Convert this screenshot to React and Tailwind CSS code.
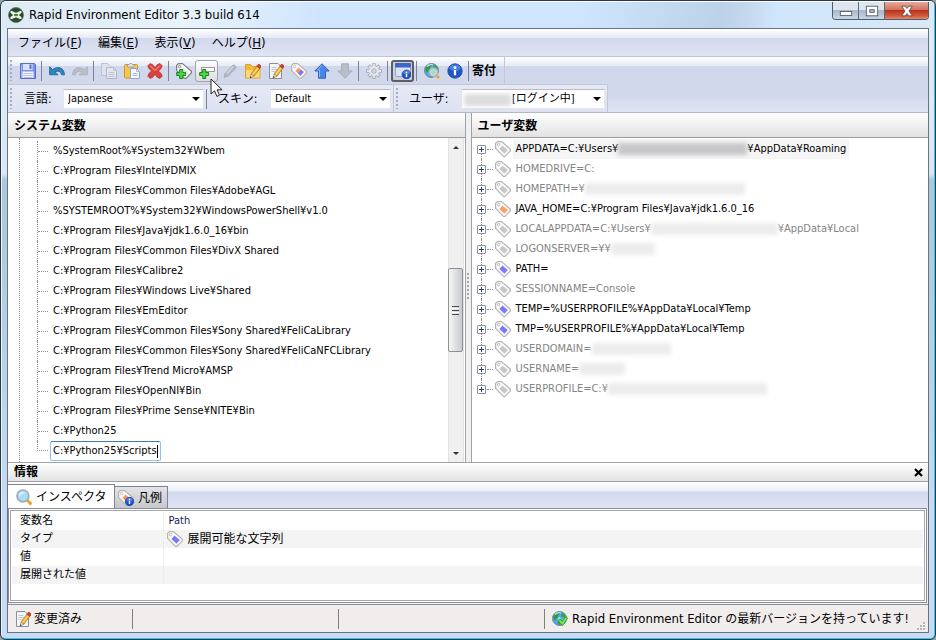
import React, { useState } from 'react';

const systemPaths = [
  '%SystemRoot%¥System32¥Wbem',
  'C:¥Program Files¥Intel¥DMIX',
  'C:¥Program Files¥Common Files¥Adobe¥AGL',
  '%SYSTEMROOT%¥System32¥WindowsPowerShell¥v1.0',
  'C:¥Program Files¥Java¥jdk1.6.0_16¥bin',
  'C:¥Program Files¥Common Files¥DivX Shared',
  'C:¥Program Files¥Calibre2',
  'C:¥Program Files¥Windows Live¥Shared',
  'C:¥Program Files¥EmEditor',
  'C:¥Program Files¥Common Files¥Sony Shared¥FeliCaLibrary',
  'C:¥Program Files¥Common Files¥Sony Shared¥FeliCaNFCLibrary',
  'C:¥Program Files¥Trend Micro¥AMSP',
  'C:¥Program Files¥OpenNI¥Bin',
  'C:¥Program Files¥Prime Sense¥NITE¥Bin',
  'C:¥Python25',
];

const userVars = [
  { name: 'APPDATA=C:¥Users¥', mask: 'w-[129px] bg-[#c6c6c8]', after: '¥AppData¥Roaming', tag: '#c8c8c8', active: true, hot: true },
  { name: 'HOMEDRIVE=C:', tag: '#c8c8c8' },
  { name: 'HOMEPATH=¥', mask: 'w-[160px] bg-[#ececec]', tag: '#c8c8c8' },
  { name: 'JAVA_HOME=C:¥Program Files¥Java¥jdk1.6.0_16', tag: '#ffa060', active: true },
  { name: 'LOCALAPPDATA=C:¥Users¥', mask: 'w-[127px] bg-[#ececec]', after: '¥AppData¥Local', tag: '#c8c8c8' },
  { name: 'LOGONSERVER=¥¥', mask: 'w-[44px] bg-[#ececec]', tag: '#c8c8c8' },
  { name: 'PATH=', tag: '#7b78ff', active: true },
  { name: 'SESSIONNAME=Console', tag: '#c8c8c8' },
  { name: 'TEMP=%USERPROFILE%¥AppData¥Local¥Temp', tag: '#7b78ff', active: true },
  { name: 'TMP=%USERPROFILE%¥AppData¥Local¥Temp', tag: '#7b78ff', active: true },
  { name: 'USERDOMAIN=', mask: 'w-[79px] bg-[#ececec]', tag: '#c8c8c8' },
  { name: 'USERNAME=', mask: 'w-[46px] bg-[#ececec]', tag: '#c8c8c8' },
  { name: 'USERPROFILE=C:¥', mask: 'w-[159px] bg-[#ececec]', tag: '#c8c8c8' },
];

const inspectorRows = [
  { label: '変数名', value: 'Path' },
  { label: 'タイプ', value: '展開可能な文字列', icon: true },
  { label: '値', value: '' },
  { label: '展開された値', value: '' },
];

/* ---------- Icons ---------- */

const Svg = ({ size = 16, children }) => (
  <svg width={size} height={size} viewBox="0 0 16 16" fill="none" className="block shrink-0" aria-hidden="true">
    {children}
  </svg>
);

const TagShape = ({ fill, stroke = '#b4b4b4' }) => (
  <>
    <path d="M.6 2.4 2.400.6h4.200l8.800 7.600v1.600L10 15.400H8.400L.6 7.400z" fill="#fbfbfb" stroke={stroke} strokeWidth="1.200" strokeLinejoin="round" />
    <circle cx="3.600" cy="3.600" r="1.200" fill="#fff" stroke={stroke} strokeWidth=".9" />
    <path d="M7.400 4.600 12.800 9 9.400 12.800 4.400 8z" fill={fill} />
  </>
);

const TagIcon = ({ fill, stroke, size }) => (
  <Svg size={size}>
    <TagShape fill={fill} stroke={stroke} />
  </Svg>
);

const Plus = () => (
  <path d="M3.700 6.500h3v3h3v3h-3v3h-3v-3h-3v-3h3z" fill="#4fd44a" stroke="#15871b" />
);

const Pencil = () => (
  <>
    <path d="M6 11 11.800 3.200l3 2.200L9 13.200z" fill="#f5b93a" stroke="#9a6424" strokeWidth=".6" />
    <path d="M7.400 12 13.300 4.400" stroke="#fbe28e" />
    <path d="m11.800 3.200 1.300-1.700c.8-.9 3.700 1.200 3 2.200l-1.300 1.700z" fill="#d8402e" stroke="#8f2216" strokeWidth=".5" />
    <path d="m6 11-.9 4.100L9 13.200z" fill="#f3dcb4" stroke="#8a6a3a" strokeWidth=".5" />
    <path d="m5.500 13.300-.4 1.800 1.600-.8z" fill="#222" />
  </>
);

const Earth = () => (
  <>
    <circle cx="7.500" cy="7.500" r="7" fill="#55a9e6" stroke="#5f7fae" strokeWidth=".9" />
    <path d="M1.600 4.500C3 2 5.400 1 7.600 1l.6 1.800-2 1.200.3 2-2.200 1.200-.6 2.600C2 9.200 1 7 1.600 4.500z" fill="#2f9a45" />
    <path d="M10 1.500c2 .8 3.600 2.500 4.200 4.600l-1.800.8-1.700-1.100-1.400.2-.4-2.100z" fill="#35a54b" />
    <path d="M5.500 10.500 8 10l1.500 2-1.300 2.300c-1.700 0-2.700-1-2.700-3.800z" fill="#35a54b" />
    <path d="M3 3.500C4.500 1.800 7 1.400 9 2" stroke="#cdeeff" strokeWidth="1.200" opacity=".9" />
    <path d="M7 5.500 9 7.500 8 9 5.500 8.500z" fill="#a8def8" />
  </>
);

const InfoDot = ({ cx = 8, cy = 8, r = 7.2 }) => (
  <>
    <circle cx={cx} cy={cy} r={r} fill="#1f56c4" stroke="#17439c" strokeWidth=".8" />
    <ellipse cx={cx} cy={cy - r * 0.45} rx={r * 0.75} ry={r * 0.45} fill="#6f9cf0" opacity=".6" />
    <rect x={cx - r * 0.16} y={cy - r * 0.15} width={r * 0.32} height={r * 0.75} fill="#fff" />
    <circle cx={cx} cy={cy - r * 0.48} r={r * 0.19} fill="#fff" />
  </>
);

const AppIcon = () => (
  <Svg>
    <circle cx="8" cy="8" r="7.500" fill="#2c4a2e" stroke="#5f7a60" strokeWidth=".8" />
    <path d="M2.500 4.200C4 3 6 5.600 8 5.600S12 3 13.500 4.200C14.500 5.500 12 7 10.800 8c1.200 1 3.700 2.500 2.700 3.800-1.500 1.200-3.500-1.400-5.500-1.400S4 13 2.500 11.800C1.500 10.500 4 9 5.200 8 4 7 1.500 5.500 2.500 4.200z" fill="#e9f4e6" />
    <ellipse cx="8" cy="8" rx="2.200" ry="1.200" fill="#55775a" />
  </Svg>
);

const SaveIcon = () => (
  <Svg>
    <path d="M.5.500h14l1 1v14H.5z" fill="#7c92e4" stroke="#5a6ec4" />
    <rect x="3" y="1" width="9.500" height="6" fill="#d9e2fa" />
    <rect x="9.500" y="1.500" width="2" height="4.500" fill="#5a6fce" />
    <rect x="2.500" y="8.500" width="11" height="6.500" fill="#f4f6fd" />
    <path d="M3.500 10.500h9M3.500 12.500h9M3.500 14.500h9" stroke="#b3bfe8" />
    <path d="M1.500 2v13" stroke="#a3b3f2" />
  </Svg>
);

const UndoIcon = () => (
  <Svg>
    <path d="M.6 3.600v8.200h8.400L6.400 9.200C8.700 7.300 11.600 8 12.600 11.800h2.900C15.200 4.600 8.800 2.600 3.600 6.600z" fill="#2e83bd" stroke="#1d6296" strokeWidth=".8" strokeLinejoin="round" />
  </Svg>
);

const RedoIcon = () => (
  <Svg>
    <path d="M15.400 3.600v8.200H7l2.600-2.600C7.300 7.300 4.400 8 3.400 11.800H.5C.8 4.600 7.200 2.600 12.400 6.600z" fill="#b9bec9" stroke="#a9aebb" strokeWidth=".8" strokeLinejoin="round" />
  </Svg>
);

const CopyIcon = () => (
  <Svg>
    <path d="M.5.500h6l3 3v9h-9z" fill="#dfe3ef" stroke="#bcc2d0" />
    <path d="M5.500 4.500h7l3 3v8h-10z" fill="#e2e6f1" stroke="#b2b8c8" />
    <path d="M12.500 4.500v3h3M7.500 9.500h6M7.500 11.500h6M7.500 13.500h6" stroke="#c0c6d5" />
  </Svg>
);

const PasteIcon = () => (
  <Svg>
    <rect x=".5" y="1.500" width="13" height="13.500" rx="1" fill="#f7c64c" stroke="#cf962c" />
    <path d="M3.500 1.500h1.500L6 .5h1.500l1 1H10v2.500H3.500z" fill="#dfe3ea" stroke="#8e96a5" strokeWidth=".8" />
    <path d="M6.500 5.500h6l3 3v7h-9z" fill="#f5f8ff" stroke="#8ea4cc" />
    <path d="M12.500 5.500v3h3M8.500 10.500h5M8.500 12.500h5" stroke="#a9bbdc" />
  </Svg>
);

const DeleteIcon = () => (
  <Svg>
    <path d="M.8 2.800 3 .6l2.600 1L8 4.600l2.400-3 2.600-1 2.200 2.200-1 2.600L11.400 8l2.800 2.600 1 2.600-2.200 2.200-2.600-1L8 11.400l-2.400 3-2.600 1L.8 13.200l1-2.600L4.600 8 1.800 5.400z" fill="#d9413f" stroke="#bb2c2c" strokeWidth=".7" strokeLinejoin="round" />
    <path d="m3 2.600 5 4.800 5-4.800" stroke="#ee8480" strokeWidth="1.200" />
  </Svg>
);

const AddVarIcon = () => (
  <Svg>
    <TagShape fill="#e9e9e9" stroke="#7c7c7c" />
    <Plus />
  </Svg>
);

const AddValueIcon = () => (
  <Svg>
    <rect x="2.500" y="4.500" width="13" height="4" fill="#fff" stroke="#999" />
    <Plus />
  </Svg>
);

const GrayPencilIcon = () => (
  <Svg>
    <path d="m2 14.500 1-4L10.500 2.500C12 1 15 4 13.700 5.500L6 13.200z" fill="#b4b9c4" stroke="#a2a8b5" strokeWidth=".8" />
    <path d="m4.800 10.600 6.500-7" stroke="#d6dae3" strokeWidth="1.400" />
  </Svg>
);

const FolderEditIcon = () => (
  <Svg>
    <path d="M.5 1.500h5l1.500 2h8v11.500H.5z" fill="#f3b93c" stroke="#d9a233" />
    <path d="M1 7h13.500v7.500H1z" fill="#fbd976" />
    <Pencil />
  </Svg>
);

const PageEditIcon = () => (
  <Svg>
    <path d="M1.500.500h8.500l3.500 3.500v11.500h-12z" fill="#f3f5f9" stroke="#8c8f98" />
    <path d="M3.500 4.500h5M3.500 6.500h6M3.500 8.500h4" stroke="#c3c9d6" />
    <Pencil />
  </Svg>
);

const TagColorIcon = () => (
  <Svg>
    <TagShape fill="#ff9560" />
    <path d="m10 6.800 2.800 2.200-3.400 3.800-2.600-2.500z" fill="#7b78ff" />
  </Svg>
);

const ArrowUpIcon = () => (
  <Svg>
    <path d="M8 .8 15.200 8H11.500v7.200h-7V8H.8z" fill="#4a86ea" stroke="#2f62c0" strokeLinejoin="round" />
    <path d="M8 2.300 3.500 7h2v7" stroke="#8fb8f8" />
  </Svg>
);

const ArrowDownIcon = () => (
  <Svg>
    <path d="M8 15.200.8 8h3.700V.8h7V8h3.700z" fill="#b9bdc8" stroke="#aaafbb" strokeLinejoin="round" />
  </Svg>
);

const GearIcon = () => (
  <Svg>
    <g stroke="#a2a7b2" strokeWidth="3.400">
      <path d="M8 .2v15.600M.2 8h15.600M2.500 2.500l11 11M13.500 2.500l-11 11" />
    </g>
    <g stroke="#e4e7ef" strokeWidth="1.800">
      <path d="M8 1v14M1 8h14M3.100 3.100l9.800 9.800M12.900 3.100l-9.800 9.800" />
    </g>
    <circle cx="8" cy="8" r="5" fill="#e4e7ef" />
    <circle cx="8" cy="8" r="2.200" fill="#d6dbeb" stroke="#a2a7b2" strokeWidth=".9" />
  </Svg>
);

const WindowInfoIcon = () => (
  <Svg>
    <rect x=".5" y=".5" width="15" height="13" rx="1" fill="#dbe3f7" stroke="#8ea1d4" />
    <rect x="0" y="0" width="16" height="4.500" rx="1" fill="#3f63c8" />
    <InfoDot cx={11.5} cy={11.500} r={4.4} />
  </Svg>
);

const EarthSearchIcon = () => (
  <Svg>
    <Earth />
    <path d="m13 13 2 2" stroke="#f0a01e" strokeWidth="2.600" />
    <circle cx="9.500" cy="9.300" r="4.200" fill="#c4dfe0" stroke="#b2b5b0" strokeWidth="1.600" />
    <circle cx="9.500" cy="9.300" r="2.200" fill="#a8d6cf" />
  </Svg>
);

const EarthOkIcon = () => (
  <Svg>
    <Earth />
    <path d="m6 9.600 2.200-1.400 1.900 2.200 3.900-4.800 1.700 1.500-5.200 7.600z" fill="#7ee850" stroke="#2c8f22" strokeWidth=".8" strokeLinejoin="round" />
  </Svg>
);

const SearchIcon = () => (
  <Svg>
    <path d="m12 12 2.400 2.400" stroke="#f0a322" strokeWidth="3" strokeLinecap="round" />
    <circle cx="6.900" cy="6.900" r="5.900" fill="#a9dcf7" stroke="#a6aab2" strokeWidth="1.700" />
    <path d="M3.600 6.500C4 4.600 5.500 3.600 7.500 3.700" stroke="#e9f8ff" strokeWidth="1.400" />
  </Svg>
);

const LegendIcon = () => (
  <Svg>
    <TagShape fill="#ff9560" />
    <InfoDot cx={11.5} cy={11.5} r={4.2} />
  </Svg>
);

/* ---------- Small parts ---------- */

const Grip = () => (
  <span className="mx-[2px] h-[21px] w-[2px] shrink-0 bg-[repeating-linear-gradient(180deg,#a7adc0_0_2px,transparent_2px_4px)]" />
);

const Separator = () => <span className="mr-[3px] ml-[2px] h-[20px] w-px shrink-0 bg-[#7d828e]" />;

const ToolButton = ({ label, look = 'border-transparent', children }) => (
  <button type="button" aria-label={label} className={`flex h-[22px] w-[23px] shrink-0 items-center justify-center rounded-[3px] border ${look}`}>
    {children}
  </button>
);

const Combo = ({ id, value, className, padding = 'pl-[4px]', children }) => (
  <div className={`relative h-[20px] ${className}`}>
    <select id={id} defaultValue={value} className={`h-full w-full appearance-none border border-[#e4e6ee] border-t-[#b8bcc8] bg-white pr-4 text-[11px] text-black outline-none ${padding}`}>
      <option>{value}</option>
    </select>
    {children}
    <span className="pointer-events-none absolute top-[8px] right-[4px] border-x-4 border-t-4 border-x-transparent border-t-black" />
  </div>
);

const PanelTitle = ({ children }) => (
  <h2 className="h-[25px] shrink-0 border-b border-[#9b9b9b] bg-linear-to-b from-white to-[#e2e2e2] pl-[6px] text-[12px] leading-[26px] font-bold">{children}</h2>
);

const Menu = ({ text, mnemonic }) => (
  <button type="button" className="px-2 text-[12px] leading-[28px]">
    {text}
    <span className="text-[13px]">
      (<u className="underline-offset-1">{mnemonic}</u>)
    </span>
  </button>
);

/* ---------- Sections ---------- */

const TitleBar = () => (
  <header className="flex h-[26px] shrink-0 items-start justify-between bg-[linear-gradient(95deg,#dceaf6_0%,#e9f3fc_20%,#cfe5fe_34%,#cfe5fd_62%,#bcd2e9_77%,#c4d8ee_80%,#d0e6fc_83%,#dbe9f6_100%)] pr-[5px] pl-[6px]">
    <div className="flex h-[25px] items-center gap-[5px]">
      <AppIcon />
      <h1 className="text-[13px] leading-4">Rapid Environment Editor 3.3 build 614</h1>
    </div>
    <div className="flex h-[18px] overflow-hidden rounded-b-[4px] border border-t-0 border-[#4e5c6e]">
      <button type="button" aria-label="Minimize" className="flex w-[26px] items-center justify-center border-r border-[#5d6a7b] bg-[linear-gradient(180deg,#dde6ef_0_45%,#a9b8c9_50%,#c8d6e4_100%)]">
        <Svg size={14}>
          <rect x="1.500" y="8.500" width="13" height="4.500" fill="#fff" stroke="#4d5766" />
        </Svg>
      </button>
      <button type="button" aria-label="Maximize" className="flex w-[26px] items-center justify-center border-r border-[#5d6a7b] bg-[linear-gradient(180deg,#dde6ef_0_45%,#a9b8c9_50%,#c8d6e4_100%)]">
        <Svg size={14}>
          <rect x="1.500" y="2.500" width="13" height="11" fill="#fff" stroke="#4d5766" />
          <rect x="5.500" y="6.500" width="5" height="3" fill="#b4c3d4" stroke="#4d5766" />
        </Svg>
      </button>
      <button type="button" aria-label="Close" className="flex w-[43px] items-center justify-center bg-[linear-gradient(180deg,#e8aa9c_0%,#d4715d_45%,#b8331d_50%,#d2573c_80%,#e08a68_100%)]">
        <Svg size={14}>
          <path d="M2 2.500h4l2 2.600 2-2.600h4L10.300 8l3.700 5.500h-4l-2-2.600-2 2.600H2L5.700 8z" fill="#fff" stroke="#5a4048" strokeWidth=".9" />
        </Svg>
      </button>
    </div>
  </header>
);

const Toolbar = () => (
  <div className="flex h-[28px] items-center self-start border-r border-[#c4c8d6] pr-2">
    <Grip />
    <div className="w-[2px]" />
    <ToolButton label="Save"><SaveIcon /></ToolButton>
    <Separator />
    <ToolButton label="Undo"><UndoIcon /></ToolButton>
    <ToolButton label="Redo"><RedoIcon /></ToolButton>
    <Separator />
    <ToolButton label="Copy"><CopyIcon /></ToolButton>
    <ToolButton label="Paste"><PasteIcon /></ToolButton>
    <ToolButton label="Delete"><DeleteIcon /></ToolButton>
    <Separator />
    <ToolButton label="Add variable"><AddVarIcon /></ToolButton>
    <ToolButton label="Add value" look="border-[#a0a3ac] bg-linear-to-b from-white to-[#dcdde2]"><AddValueIcon /></ToolButton>
    <ToolButton label="Edit"><GrayPencilIcon /></ToolButton>
    <ToolButton label="Edit folder"><FolderEditIcon /></ToolButton>
    <ToolButton label="Edit text"><PageEditIcon /></ToolButton>
    <ToolButton label="Variable type"><TagColorIcon /></ToolButton>
    <ToolButton label="Move up"><ArrowUpIcon /></ToolButton>
    <ToolButton label="Move down"><ArrowDownIcon /></ToolButton>
    <Separator />
    <ToolButton label="Options"><GearIcon /></ToolButton>
    <Separator />
    <ToolButton label="Information panel" look="border-2 border-[#5c5e66] bg-[#cdcfd8]"><WindowInfoIcon /></ToolButton>
    <Separator />
    <ToolButton label="Check for updates"><EarthSearchIcon /></ToolButton>
    <ToolButton label="About">
      <Svg>
        <InfoDot />
      </Svg>
    </ToolButton>
    <Separator />
    <button type="button" className="text-[12px] leading-4 font-bold">寄付</button>
  </div>
);

const OptionsBar = () => (
  <div className="flex h-[28px] items-center self-start border-t border-r border-[#c4c8d6] bg-linear-to-b from-[#e6e9f5] to-[#dde2f3] pr-[2px] text-[12px]">
    <Grip />
    <label htmlFor="language" className="w-[49px] pl-[10px]">言語:</label>
    <Combo id="language" value="Japanese" className="w-[141px]" />
    <Separator />
    <label htmlFor="skin" className="w-[60px] pl-[8px] whitespace-nowrap">スキン:</label>
    <Combo id="skin" value="Default" className="w-[121px]" />
    <span className="ml-[2px] h-full w-px bg-[#c4c8d6]" />
    <Grip />
    <label htmlFor="user" className="w-[61px] pl-[9px]">ユーザ:</label>
    <Combo id="user" value="[ログイン中]" className="w-[144px]" padding="pl-[50px]">
      <span className="absolute top-[5px] left-[3px] h-[12px] w-[47px] bg-[#dcdcdc] blur-[2px]" />
    </Combo>
  </div>
);

const ScrollBar = () => (
  <div className="flex w-[16px] shrink-0 flex-col items-center border-x border-[#e2e2e2] bg-[#f0f0f0]">
    <span className="mt-[8px] border-x-[3px] border-b-[3px] border-x-transparent border-b-[#333]" />
    <div className="mt-[119px] flex h-[84px] w-[15px] flex-col items-center justify-center gap-px rounded-[2px] border border-[#8e9096] bg-linear-to-r from-[#f6f6f6] to-[#c9cacf]">
      <span className="h-px w-[7px] bg-[#4c4c4c]" />
      <span className="h-px w-[7px] bg-white" />
      <span className="h-px w-[7px] bg-[#4c4c4c]" />
      <span className="h-px w-[7px] bg-white" />
      <span className="h-px w-[7px] bg-[#4c4c4c]" />
    </div>
    <span className="mt-auto mb-[7px] border-x-[3px] border-t-[3px] border-x-transparent border-t-[#333]" />
  </div>
);

const SystemTree = () => {
  const [path, setPath] = useState('C:¥Python25¥Scripts');

  return (
    <section className="flex min-w-0 flex-1 flex-col border-r border-[#9fa1a8]">
      <PanelTitle>システム変数</PanelTitle>
      <div className="flex min-h-0 flex-1 bg-white pr-px">
        <ul className="ml-[11px] min-w-0 flex-1 overflow-hidden border-l border-dotted border-[#8c8c8c] pt-[3px] text-[11px]">
          {systemPaths.map((item) => (
            <li key={item} className="ml-[17px] flex h-[20px] items-center border-l border-dotted border-[#8c8c8c] whitespace-nowrap">
              <span className="mr-[5px] w-[10px] border-t border-dotted border-[#8c8c8c]" />
              {item}
            </li>
          ))}
          <li className="ml-[17px] flex h-[20px] items-start">
            <span className="mr-[2px] h-[10px] w-[11px] border-b border-l border-dotted border-[#8c8c8c]" />
            <span className="relative flex h-[20px] w-[111px] rounded-[2px] border border-[#8fc3e6] border-t-[#3d7bad] bg-white">
              <input aria-label="Path value" value={path} onChange={(e) => setPath(e.target.value)} className="w-full pl-[2px] text-[11px] outline-none" />
              <span className="absolute top-[3px] right-[2px] h-[13px] w-px bg-black" />
            </span>
          </li>
        </ul>
        <ScrollBar />
      </div>
    </section>
  );
};

const UserTree = () => (
  <section className="flex min-w-0 flex-1 flex-col border-l border-[#9fa1a8]">
    <PanelTitle>ユーザ変数</PanelTitle>
    <ul className="min-h-0 flex-1 overflow-hidden bg-white pt-px pl-[5px] text-[11px]">
      {userVars.map((v, i) => (
        <li key={v.name} className={`flex h-[20px] items-center whitespace-nowrap ${v.active ? 'text-black' : 'text-[#848484]'}`}>
          <span className="flex h-full w-[9px] flex-col items-center">
            <span className={`flex-1 border-l border-dotted ${i === 0 ? 'border-transparent' : 'border-[#8c8c8c]'}`} />
            <button type="button" aria-label="Expand" className="flex size-[9px] items-center justify-center rounded-[1px] border border-[#8d8f96] bg-white">
              <svg width="5" height="5" viewBox="0 0 5 5" aria-hidden="true">
                <path d="M0 2.500h5M2.500 0v5" stroke="#27408b" />
              </svg>
            </button>
            <span className={`flex-1 border-l border-dotted ${i === userVars.length - 1 ? 'border-transparent' : 'border-[#8c8c8c]'}`} />
          </span>
          <span className="mx-px w-[6px] border-t border-dotted border-[#8c8c8c]" />
          <span className="ml-px">
            <TagIcon fill={v.tag} />
          </span>
          <span className={`ml-[2px] flex h-full items-center px-[3px] ${v.hot ? 'bg-[#f5f5f5]' : ''}`}>
            {v.name}
            {v.mask && <span className={`h-[12px] blur-[2px] ${v.mask}`} />}
            {v.after}
          </span>
        </li>
      ))}
    </ul>
  </section>
);

const Inspector = () => (
  <section className="shrink-0">
    <div className="flex h-[20px] items-center justify-between border-y border-[#a2a2a6] bg-linear-to-b from-white to-[#e2e2e2] pr-[5px] pl-[6px]">
      <h2 className="text-[12px] leading-[18px] font-bold">情報</h2>
      <button type="button" aria-label="Close panel">
        <svg width="9" height="9" viewBox="0 0 9 9" className="block" aria-hidden="true">
          <path d="m1 1 7 7M8 1 1 8" stroke="#000" strokeWidth="2.200" />
        </svg>
      </button>
    </div>
    <div role="tablist" className="flex h-[26px] items-end bg-[linear-gradient(180deg,#ffffff_0%,#eaedf8_36%,#d2d9ec_37%,#dfe4f5_100%)] text-[12px]">
      <button type="button" role="tab" aria-selected="true" className="flex h-[24px] w-[107px] items-center gap-[4px] border-t border-r border-[#7e8391] bg-white pl-[8px] whitespace-nowrap">
        <SearchIcon />
        インスペクタ
      </button>
      <button type="button" role="tab" aria-selected="false" className="flex h-[22px] w-[53px] items-center gap-[4px] border-t border-r border-[#7e8391] bg-linear-to-b from-[#e4e4e6] to-[#c6c7cc] pl-[3px] whitespace-nowrap">
        <LegendIcon />
        凡例
      </button>
    </div>
    <div className="mr-px h-[95px] border border-[#8b8e99] bg-white p-px">
      <div className="h-full border border-[#a4a6ae] px-px pt-px">
        <table className="w-full table-fixed">
          <tbody>
            {inspectorRows.map((row) => (
              <tr key={row.label} className="h-[18px] odd:bg-white even:bg-[#f4f4f4]">
                <th scope="row" className="w-[151px] border-r border-dotted border-[#e8e8e8] p-0 pl-[8px] text-left text-[11px] leading-[18px] font-normal">{row.label}</th>
                <td className="p-0 pl-[3px] text-[12px] leading-[18px]">
                  <span className="flex items-center gap-[5px]">
                    {row.icon && <TagIcon fill="#7b78ff" />}
                    <span className={row.icon ? '' : 'pl-[2px] text-[11px] leading-[18px] text-[#1a1a50]'}>{row.value}</span>
                  </span>
                </td>
              </tr>
            ))}
          </tbody>
        </table>
      </div>
    </div>
  </section>
);

const StatusBar = () => (
  <footer className="mt-px flex h-[28px] shrink-0 items-center border-t border-[#8b8e99] bg-[#f0edec] text-[12px]">
    <div className="flex h-[20px] w-[125px] items-center gap-[3px] border-r border-[#808080] pl-[7px]">
      <PageEditIcon />
      変更済み
    </div>
    <div className="h-[20px] w-[206px] border-r border-[#808080]" />
    <div className="h-[20px] w-[206px] border-r border-[#808080]" />
    <div className="flex min-w-0 flex-1 items-center gap-[4px] pl-[7px] whitespace-nowrap">
      <EarthOkIcon />
      <p>
        <span className="text-[13px]">Rapid Environment Editor</span> の最新バージョンを持っています!
      </p>
    </div>
    <svg width="9" height="9" viewBox="0 0 9 9" className="mr-[2px] mb-px shrink-0 self-end" aria-hidden="true">
      <path d="M6 0h2v2H6zM3 3h2v2H3zM6 3h2v2H6zM0 6h2v2H0zM3 6h2v2H3zM6 6h2v2H6z" fill="#b9b5b4" />
    </svg>
  </footer>
);

const App = () => (
  <div className="h-screen bg-[#8fa3ad] font-['DejaVu_Sans_Condensed','Noto_Sans_CJK_JP',sans-serif] text-black">
    <div className="relative h-full overflow-hidden rounded-[6px] border border-[#2d3642]">
      <div className="flex h-full flex-col rounded-[5px] border border-t-white border-r-[#26cdf5] border-b-[#26cdf5] border-l-[#e8f4fb] bg-[linear-gradient(180deg,#dfedf9_0%,#d8e8f6_27%,#a9c8dc_28%,#b5d2e6_55%,#c6dcf4_80%,#c6dcf6_100%)]">
        <TitleBar />
        <div className="mx-[5px] mb-[5px] flex min-h-0 flex-1 flex-col border border-[#6b7382] bg-[#f0f0f0]">
          <nav className="flex h-[28px] shrink-0 border-b border-[#c2c6d2] bg-[linear-gradient(180deg,#ffffff_0%,#e6eaf5_32%,#d2d8ec_33%,#e0e5f4_100%)] pl-[2px]">
            <Menu text="ファイル" mnemonic="F" />
            <Menu text="編集" mnemonic="E" />
            <Menu text="表示" mnemonic="V" />
            <Menu text="ヘルプ" mnemonic="H" />
          </nav>
          <div className="flex h-[56px] shrink-0 flex-col border-b border-[#b3b9cd] bg-[linear-gradient(180deg,#ffffff_0%,#e6eaf5_16%,#d2d8ec_17%,#d2d8ec_70%,#e0e5f5_100%)]">
            <Toolbar />
            <OptionsBar />
          </div>
          <main className="flex min-h-0 flex-1">
            <SystemTree />
            <div className="flex w-[5px] shrink-0 flex-col items-center bg-[#f0f0f0]">
              <span className="mt-[160px] h-[27px] w-[2px] bg-[repeating-linear-gradient(180deg,#a8a8a8_0_2px,transparent_2px_4px)]" />
            </div>
            <UserTree />
          </main>
          <Inspector />
          <StatusBar />
        </div>
      </div>
      {/* mouse pointer over the toolbar */}
      <svg width="14" height="20" viewBox="0 0 14 20" className="pointer-events-none absolute top-[77px] left-[209px]" aria-hidden="true">
        <path d="M1 1v15l3.500-3.200 2.400 5.600 2.600-1.100-2.400-5.500h5z" fill="#fff" stroke="#222" strokeLinejoin="round" />
      </svg>
    </div>
  </div>
);

export default App;
